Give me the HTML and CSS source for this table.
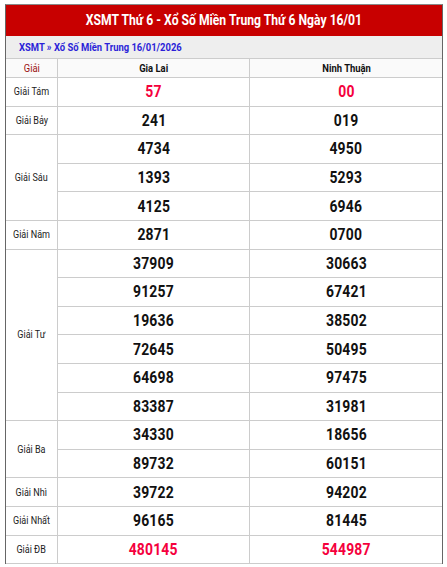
FILE: index.html
```html
<!DOCTYPE html>
<html lang="vi">
<head>
<meta charset="utf-8">
<link rel="stylesheet" href="styles.css">
</head>
<body>
<div class="box">
  <h2 class="title"><span class="c">XSMT Thứ 6 - Xổ Số Miền Trung Thứ 6 Ngày 16/01</span></h2>
  <div class="crumb"><span class="c cl"><a>XSMT</a> » <a>Xổ Số Miền Trung 16/01/2026</a></span></div>
  <table class="kq">
    <thead>
      <tr><th class="c1"><span class="c">Giải</span></th><th><span class="c">Gia Lai</span></th><th><span class="c">Ninh Thuận</span></th></tr>
    </thead>
    <tbody>
      <tr><td class="lb"><span class="c">Giải Tám</span></td><td class="n red"><span class="c">57</span></td><td class="n red"><span class="c">00</span></td></tr>
      <tr><td class="lb"><span class="c">Giải Bảy</span></td><td class="n"><span class="c">241</span></td><td class="n"><span class="c">019</span></td></tr>
      <tr><td class="lb" rowspan="3"><span class="c">Giải Sáu</span></td><td class="n"><span class="c">4734</span></td><td class="n"><span class="c">4950</span></td></tr>
      <tr><td class="n"><span class="c">1393</span></td><td class="n"><span class="c">5293</span></td></tr>
      <tr><td class="n"><span class="c">4125</span></td><td class="n"><span class="c">6946</span></td></tr>
      <tr><td class="lb"><span class="c">Giải Năm</span></td><td class="n"><span class="c">2871</span></td><td class="n"><span class="c">0700</span></td></tr>
      <tr><td class="lb" rowspan="6"><span class="c">Giải Tư</span></td><td class="n"><span class="c">37909</span></td><td class="n"><span class="c">30663</span></td></tr>
      <tr><td class="n"><span class="c">91257</span></td><td class="n"><span class="c">67421</span></td></tr>
      <tr><td class="n"><span class="c">19636</span></td><td class="n"><span class="c">38502</span></td></tr>
      <tr><td class="n"><span class="c">72645</span></td><td class="n"><span class="c">50495</span></td></tr>
      <tr><td class="n"><span class="c">64698</span></td><td class="n"><span class="c">97475</span></td></tr>
      <tr><td class="n"><span class="c">83387</span></td><td class="n"><span class="c">31981</span></td></tr>
      <tr><td class="lb" rowspan="2"><span class="c">Giải Ba</span></td><td class="n"><span class="c">34330</span></td><td class="n"><span class="c">18656</span></td></tr>
      <tr><td class="n"><span class="c">89732</span></td><td class="n"><span class="c">60151</span></td></tr>
      <tr><td class="lb"><span class="c">Giải Nhì</span></td><td class="n"><span class="c">39722</span></td><td class="n"><span class="c">94202</span></td></tr>
      <tr><td class="lb"><span class="c">Giải Nhất</span></td><td class="n"><span class="c">96165</span></td><td class="n"><span class="c">81445</span></td></tr>
      <tr><td class="lb"><span class="c">Giải ĐB</span></td><td class="n red"><span class="c">480145</span></td><td class="n red"><span class="c">544987</span></td></tr>
    </tbody>
  </table>
</div>
</body>
</html>
```
FILE: styles.css
```css
html, body {
  margin: 0;
  padding: 0;
  background: #fff;
}
body {
  font-family: Roboto, "Liberation Sans", sans-serif;
  padding: 4px 4px 0 5px;
}
.c {
  display: inline-block;
  transform: scaleX(0.82);
  white-space: nowrap;
}
.cl { transform-origin: left center; }
.box {
  width: 436px;
  border-left: 1px solid #666;
  border-right: 1px solid #666;
  border-top: 1px solid #888;
}
.title {
  margin: 0;
  background: #c80000;
  color: #fff;
  font-size: 15.5px;
  font-weight: bold;
  text-align: center;
  height: 31px;
  line-height: 31px;
}
.title .c { transform: scaleX(0.785); }
.crumb {
  background: #eeeeee;
  height: 22px;
  line-height: 22px;
  padding-left: 13px;
  font-size: 11.5px;
  font-weight: bold;
  color: #2b1fd8;
  border-bottom: 1px solid #ccc;
}
.crumb a { color: #2b1fd8; }
.kq {
  width: 100%;
  border-collapse: collapse;
  table-layout: fixed;
}
.kq th, .kq td {
  border: 1px solid #ccc;
  text-align: center;
  padding: 0;
}
.kq tr > :first-child { border-left: 0; }
.kq tr > :last-child { border-right: 0; }
.kq thead tr > * { border-top: 0; }
.kq th {
  background: #fafafa;
  height: 18px;
  font-size: 11.5px;
  font-weight: bold;
  color: #111;
}
.kq th.c1 {
  width: 51px;
  color: #9a1010;
  font-weight: normal;
}
.kq td {
  height: 27.6px;
}
.lb {
  font-size: 10.5px;
  color: #222;
}
.lb .c { transform: scaleX(0.86); }
.n {
  font-size: 16px;
  font-weight: bold;
  color: #111;
  letter-spacing: 0.2px;
}
.n .c { transform: scaleX(0.87); }
.n.red { color: #f5003d; }
```
